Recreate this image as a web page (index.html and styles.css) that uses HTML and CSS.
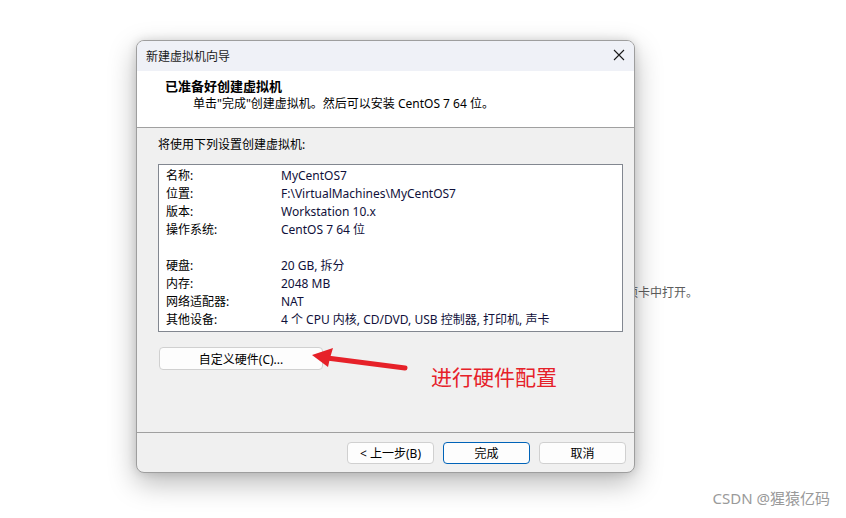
FILE: index.html
```html
<!DOCTYPE html>
<html lang="zh-CN">
<head>
    <meta charset="UTF-8">
    <meta name="viewport" content="width=device-width, initial-scale=1.0">
    <title>新建虚拟机向导</title>
    <link rel="stylesheet" href="styles.css">
</head>
<body>
    <div class="desktop">
        <p class="behind-text">选项卡中打开。</p>

        <div class="dialog">
            <div class="title-bar">
                <span>新建虚拟机向导</span>
                <svg class="close-icon" width="12" height="12" viewBox="0 0 12 12">
                    <path d="M1 1 L11 11 M11 1 L1 11" stroke="#1a1a1a" stroke-width="1.1" fill="none"/>
                </svg>
            </div>

            <div class="wizard-header">
                <h1>已准备好创建虚拟机</h1>
                <p>单击"完成"创建虚拟机。然后可以安装 CentOS 7 64 位。</p>
            </div>

            <div class="wizard-body">
                <p class="intro">将使用下列设置创建虚拟机:</p>
                <div class="summary">
                    <div class="row"><span class="key">名称:</span><span>MyCentOS7</span></div>
                    <div class="row"><span class="key">位置:</span><span>F:\VirtualMachines\MyCentOS7</span></div>
                    <div class="row"><span class="key">版本:</span><span>Workstation 10.x</span></div>
                    <div class="row"><span class="key">操作系统:</span><span>CentOS 7 64 位</span></div>
                    <div class="row"></div>
                    <div class="row"><span class="key">硬盘:</span><span>20 GB, 拆分</span></div>
                    <div class="row"><span class="key">内存:</span><span>2048 MB</span></div>
                    <div class="row"><span class="key">网络适配器:</span><span>NAT</span></div>
                    <div class="row"><span class="key">其他设备:</span><span>4 个 CPU 内核, CD/DVD, USB 控制器, 打印机, 声卡</span></div>
                </div>
                <button class="btn btn-custom">自定义硬件(C)...</button>
            </div>

            <div class="wizard-footer">
                <button class="btn">&lt; 上一步(B)</button>
                <button class="btn btn-primary">完成</button>
                <button class="btn">取消</button>
            </div>
        </div>

        <!-- annotation -->
        <svg class="arrow" width="110" height="36" viewBox="0 0 110 36">
            <polygon points="7,15 28,8 25,18 23,27" fill="#e62129"/>
            <line x1="22" y1="18" x2="100" y2="28" stroke="#e62129" stroke-width="5" stroke-linecap="round"/>
        </svg>
        <p class="note">进行硬件配置</p>

        <p class="watermark">CSDN @猩猿亿码</p>
    </div>
</body>
</html>
```

FILE: styles.css
```css
body {
    margin: 0;
    padding: 0;
    background-color: #ffffff;
    font-family: "Noto Sans", "Noto Sans CJK SC", sans-serif;
}
.desktop {
    position: relative;
    width: 846px;
    height: 518px;
    overflow: hidden;
}
.behind-text {
    position: absolute;
    left: 614px;
    top: 285px;
    margin: 0;
    font-size: 12px;
    line-height: 16px;
    color: #5c5c5c;
}
.dialog {
    position: absolute;
    left: 136px;
    top: 40px;
    width: 499px;
    height: 433px;
    box-sizing: border-box;
    border: 1px solid #9e9e9e;
    border-radius: 8px;
    background-color: #f0f0f0;
    overflow: hidden;
    display: flex;
    flex-direction: column;
    font-size: 12px;
    color: #000;
    box-shadow: 0 10px 28px rgba(0,0,0,0.28), 0 0 10px rgba(0,0,0,0.12);
}
.title-bar {
    height: 30px;
    flex-shrink: 0;
    display: flex;
    align-items: center;
    justify-content: space-between;
    padding: 0 9px 0 9px;
    background-color: #eff1f7;
    color: #1a1a1a;
}
.close-icon {
    margin-top: -2px;
}
.wizard-header {
    height: 57px;
    flex-shrink: 0;
    box-sizing: border-box;
    background-color: #ffffff;
    border-bottom: 1px solid #a0a0a0;
    padding: 6px 0 0 28px;
}
.wizard-header h1 {
    margin: 0;
    font-size: 13px;
    line-height: 18px;
    font-weight: bold;
}
.wizard-header p {
    margin: 0 0 0 28px;
    line-height: 18px;
}
.wizard-body {
    flex: 1;
    padding: 8px 11px 0 21px;
}
.intro {
    margin: 0 0 10px 0;
    line-height: 18px;
}
.summary {
    height: 168px;
    box-sizing: border-box;
    border: 1px solid #828790;
    background-color: #ffffff;
    padding: 2px 0 0 7px;
}
.row {
    display: flex;
    height: 18px;
    line-height: 18px;
    color: #10103a;
}
.row .key {
    width: 115px;
    flex-shrink: 0;
    color: #000;
}
.btn {
    font-family: inherit;
    font-size: 12px;
    color: #000;
    width: 87px;
    height: 22px;
    padding: 0;
    background-color: #fdfdfd;
    border: 1px solid #d0d0d0;
    border-radius: 4px;
}
.btn-custom {
    width: 164px;
    height: 23px;
    margin: 15px 0 0 1px;
}
.btn-primary {
    border-color: #0063b8;
}
.wizard-footer {
    height: 40px;
    flex-shrink: 0;
    box-sizing: border-box;
    border-top: 1px solid #a0a0a0;
    display: flex;
    justify-content: flex-end;
    align-items: flex-start;
    gap: 9px;
    padding: 9px 8px 0 0;
}
.arrow {
    position: absolute;
    left: 305px;
    top: 340px;
}
.note {
    position: absolute;
    left: 431px;
    top: 364px;
    margin: 0;
    font-size: 21px;
    line-height: 26px;
    color: #e62129;
}
.watermark {
    position: absolute;
    right: 16px;
    top: 489px;
    margin: 0;
    font-size: 15px;
    line-height: 18px;
    color: #9a9a9a;
}
```
